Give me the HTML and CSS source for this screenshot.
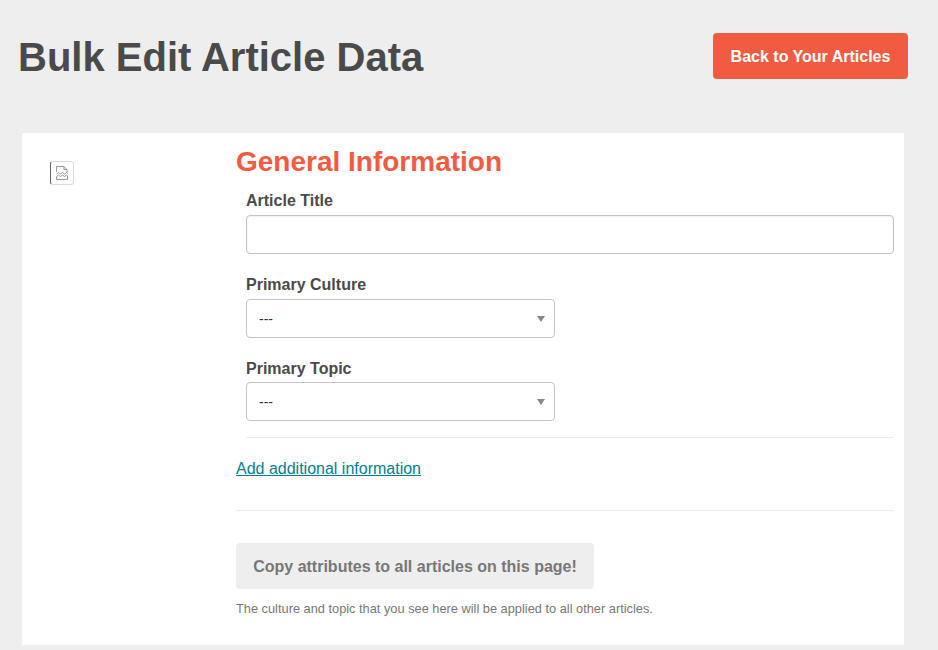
FILE: index.html
```html
<!DOCTYPE html>
<html lang="en">
<head>
<meta charset="utf-8">
<title>Bulk Edit Article Data</title>
<link rel="stylesheet" href="styles.css">
</head>
<body>
<header class="page-head">
  <h1 class="page-title">Bulk Edit Article Data</h1>
  <a class="back-btn" href="#">Back to Your Articles</a>
</header>
<main class="card">
  <div class="thumb-col">
    <span class="broken-img">
      <svg width="14" height="16" viewBox="0 0 14 16" fill="none" stroke="#999999" stroke-width="1">
        <path d="M1.5 7V1.500h7.500l3 3V8"/>
        <path d="M9 1.500v3h3"/>
        <path d="M1.500 9l2-1.500 2 1.500 2-1.500 2 1.500 2-1.500 1 1"/>
        <path d="M1.500 11.500l2-1.500 2 1.500 2-1.500 2 1.500 2-1.500 1 1v3.500h-11z"/>
      </svg>
    </span>
  </div>
  <div class="form-col">
    <h2 class="section-title">General Information</h2>
    <div class="fields">
      <div class="field field-first">
        <label class="field-label">Article Title</label>
        <input class="text-input" type="text">
      </div>
      <div class="field">
        <label class="field-label">Primary Culture</label>
        <div class="select-box"><span>---</span><i class="caret"></i></div>
      </div>
      <div class="field field-last">
        <label class="field-label">Primary Topic</label>
        <div class="select-box"><span>---</span><i class="caret"></i></div>
      </div>
    </div>
    <a class="add-link" href="#">Add additional information</a>
    <hr class="rule">
    <button class="copy-btn" type="button">Copy attributes to all articles on this page!</button>
    <p class="note">The culture and topic that you see here will be applied to all other articles.</p>
  </div>
</main>
</body>
</html>
```
FILE: styles.css
```css
* { box-sizing: border-box; }
html, body { margin: 0; height: 650px; overflow: hidden; }
body {
  background: #eeeeee;
  font-family: "Liberation Sans", Arial, sans-serif;
  color: #4a4a4a;
}
.page-head {
  display: flex;
  justify-content: space-between;
  align-items: flex-start;
  height: 133px;
  padding: 33px 30px 0 18px;
}
.page-title {
  margin: 0;
  font-size: 40px;
  line-height: 48px;
  font-weight: 700;
  color: #4a4a4a;
}
.back-btn {
  display: block;
  width: 195px;
  height: 46px;
  line-height: 47px;
  text-align: center;
  background: #f15b42;
  color: #fff;
  border-radius: 4px;
  font-size: 16px;
  font-weight: 700;
  text-decoration: none;
}
.card {
  display: flex;
  width: 882px;
  height: 512px;
  margin-left: 22px;
  background: #fff;
}
.thumb-col { width: 214px; padding: 28px 0 0 28px; }
.broken-img {
  display: flex;
  align-items: center;
  justify-content: center;
  width: 24px;
  height: 24px;
  border: 1px solid #dcdcdc;
  border-left-color: #666;
  border-radius: 3px;
}
.form-col { width: 658px; }
.section-title {
  margin: 13px 0 0;
  font-size: 28px;
  line-height: 32px;
  font-weight: 700;
  color: #f15b42;
}
.fields {
  margin-left: 10px;
  padding-bottom: 16px;
  border-bottom: 1px solid #eeeeee;
}
.field { padding-top: 7px; padding-bottom: 13px; }
.field-first { padding-top: 12px; }
.field-last { padding-bottom: 0; }
.field-label {
  display: block;
  font-size: 16px;
  line-height: 22px;
  font-weight: 700;
  margin-bottom: 3px;
}
.field-last .field-label { margin-bottom: 2px; }
.text-input {
  display: block;
  width: 100%;
  height: 39px;
  border: 1px solid #c4c4c4;
  border-radius: 4px;
  background: #fff;
  box-shadow: inset 0 1px 2px rgba(0,0,0,.08);
  outline: none;
}
.select-box {
  display: flex;
  justify-content: space-between;
  align-items: center;
  width: 309px;
  height: 39px;
  padding: 0 9px 0 12px;
  border: 1px solid #c4c4c4;
  border-radius: 4px;
  background: #fff;
  font-size: 14px;
  color: #333;
}
.field-last .select-box { padding-top: 1px; }
.caret {
  width: 0;
  height: 0;
  border-left: 4px solid transparent;
  border-right: 4px solid transparent;
  border-top: 6px solid #888;
}
.add-link {
  display: block;
  width: max-content;
  margin-top: 21px;
  font-size: 16px;
  line-height: 19px;
  color: #00818f;
  text-decoration: underline;
}
.rule {
  height: 1px;
  margin: 32px 0 32px;
  border: 0;
  background: #eeeeee;
}
.copy-btn {
  display: block;
  width: 358px;
  height: 46px;
  padding: 2px 0 0;
  border: 0;
  border-radius: 4px;
  background: #eeeeee;
  color: #777;
  font-family: inherit;
  font-size: 16px;
  font-weight: 700;
}
.note {
  margin: 12px 0 0;
  font-size: 12.8px;
  line-height: 16px;
  color: #777;
}
```
